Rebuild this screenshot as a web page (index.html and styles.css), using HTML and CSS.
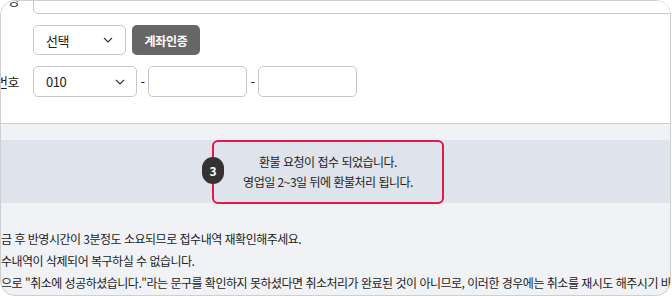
FILE: index.html
```html
<!DOCTYPE html>
<html lang="ko">
<head>
<meta charset="utf-8">
<link rel="stylesheet" href="styles.css">
</head>
<body>
<div class="frame">
  <div class="form">
    <div class="row row-top">
      <div class="label">예금주명</div>
      <div class="input wide"></div>
    </div>
    <div class="row row-bank">
      <div class="label"></div>
      <div class="select bank"><span>선택</span>
        <svg class="chev" width="10" height="6" viewBox="0 0 10 6"><path d="M1 1l4 4 4-4" fill="none" stroke="#333" stroke-width="1.1"/></svg>
      </div>
      <button class="btn">계좌인증</button>
    </div>
    <div class="row row-phone">
      <div class="label">휴대폰번호</div>
      <div class="select phone"><span>010</span>
        <svg class="chev" width="10" height="6" viewBox="0 0 10 6"><path d="M1 1l4 4 4-4" fill="none" stroke="#333" stroke-width="1.1"/></svg>
      </div>
      <span class="dash">-</span>
      <div class="input part"></div>
      <span class="dash">-</span>
      <div class="input part"></div>
    </div>
  </div>
  <div class="band"></div>
  <div class="highlight">
    <div class="msg">
      <span class="badge">3</span>
      <p>환불 요청이 접수 되었습니다.</p>
      <p>영업일 2~3일 뒤에 환불처리 됩니다.</p>
    </div>
  </div>
  <div class="notes">
    <p>금 후 반영시간이 3분정도 소요되므로 접수내역 재확인해주세요.</p>
    <p>수내역이 삭제되어 복구하실 수 없습니다.</p>
    <p>으로 "취소에 성공하셨습니다."라는 문구를 확인하지 못하셨다면 취소처리가 완료된 것이 아니므로, 이러한 경우에는 취소를 재시도 해주시기 바랍니다.</p>
  </div>
</div>
</body>
</html>
```

FILE: styles.css
```css
* { box-sizing: border-box; }
html, body { margin: 0; padding: 0; background: #fff; }
body {
  font-family: "Noto Sans CJK KR", "Noto Sans", sans-serif;
  color: #222;
  letter-spacing: -0.5px;
}
.frame {
  width: 671px;
  height: 296px;
  border: 1px solid #cfcfcf;
  border-radius: 15px;
  overflow: hidden;
  background: #f1f2f6;
}
.form {
  background: #fff;
  height: 123px;
  border-bottom: 1px solid #cdcdcd;
  display: flex;
  flex-direction: column;
  gap: 11px;
}
.row {
  display: flex;
  align-items: center;
  height: 30px;
  flex: none;
}
.row-top { margin-top: -17px; }
.row-phone { height: 31px; }
.label {
  width: 32px;
  flex: none;
  display: flex;
  justify-content: flex-end;
  padding-right: 14px;
  white-space: nowrap;
  font-size: 13px;
  color: #222;
}
.input {
  height: 100%;
  border: 1px solid #c8c8c8;
  border-radius: 5px;
  background: #fff;
  flex: none;
}
.input.wide { width: 700px; }
.input.part { width: 99px; }
.select {
  height: 100%;
  border: 1px solid #c8c8c8;
  border-radius: 5px;
  background: #fff;
  display: flex;
  align-items: center;
  justify-content: space-between;
  padding: 0 12px 0 12px;
  font-size: 13px;
  color: #222;
  flex: none;
}
.select.bank { width: 93px; }
.select.phone { width: 104px; padding-right: 11px; }
.chev { display: block; }
.btn {
  margin-left: 6px;
  width: 68px;
  height: 30px;
  border: 0;
  border-radius: 5px;
  background: #666;
  color: #fff;
  font-family: inherit;
  font-size: 12px;
  font-weight: 700;
  letter-spacing: -0.3px;
  padding: 0;
}
.dash {
  width: 11px;
  text-align: center;
  font-size: 13px;
  color: #222;
  flex: none;
}
.band { height: 16px; background: #f1f2f6; }
.highlight {
  height: 63px;
  background: #dfe3eb;
  padding-left: 211px;
}
.msg {
  position: relative;
  width: 232px;
  height: 64px;
  border: 2px solid #e2174a;
  border-radius: 6px;
  display: flex;
  flex-direction: column;
  justify-content: center;
  align-items: center;
  font-size: 12px;
  color: #222;
  line-height: 20px;
}
.msg p { margin: 0; }
.badge {
  position: absolute;
  left: -12px;
  top: 15px;
  width: 22px;
  height: 27px;
  border-radius: 11px;
  background: #333;
  color: #fff;
  font-size: 12px;
  font-weight: 700;
  letter-spacing: 0;
  display: flex;
  align-items: center;
  justify-content: center;
}
.notes {
  padding-top: 25px;
  padding-left: 0;
  font-size: 12px;
  line-height: 22px;
  color: #222;
  white-space: nowrap;
}
.notes p { margin: 0; }
```
